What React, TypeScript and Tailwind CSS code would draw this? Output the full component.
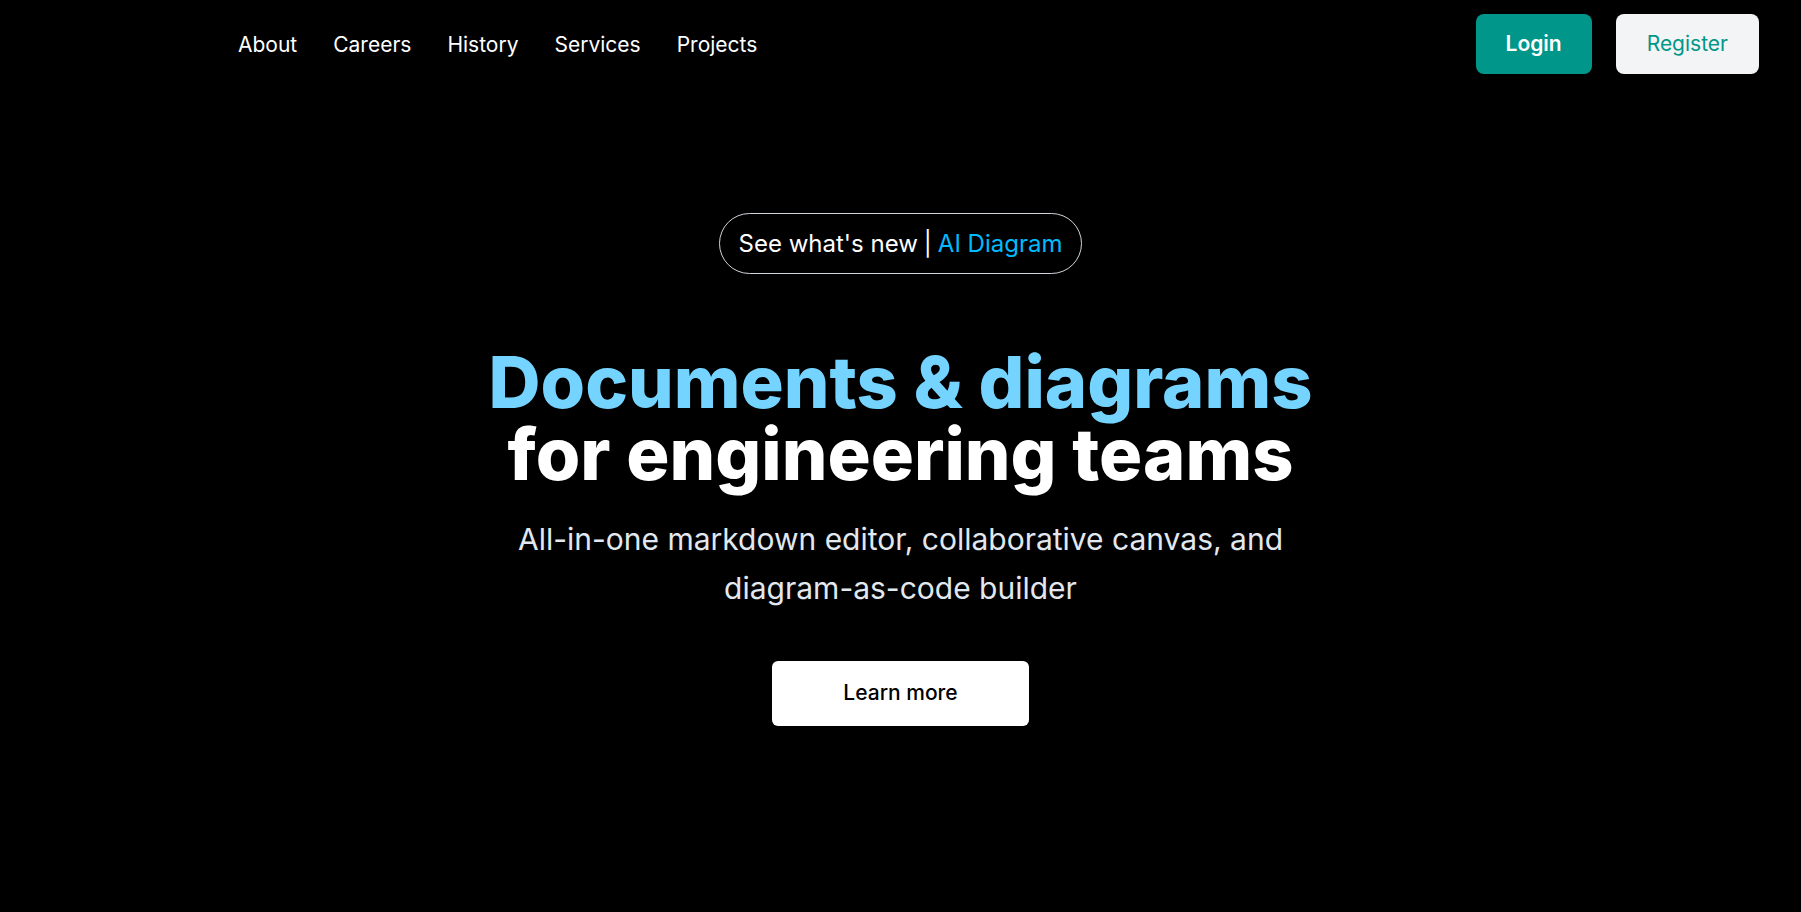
import React from "react";

const links = ["About", "Careers", "History", "Services", "Projects"];

const App: React.FC = () => {
  return (
    <div className="min-h-[912px] bg-black text-white font-['Inter','Liberation_Sans',sans-serif]">
      <header className="flex items-center justify-between py-3.5 pr-[42px] pl-[238px]">
        <nav className="mt-[2px] flex items-center gap-9">
          {links.map((link) => (
            <a key={link} href="#" className="text-[21px] text-white">
              {link}
            </a>
          ))}
        </nav>
        <div className="flex items-center gap-6">
          <button className="rounded-lg bg-teal-600 px-[30px] py-4 text-[21px] leading-7 font-semibold text-white">
            Login
          </button>
          <button className="rounded-lg bg-gray-100 px-[31px] py-4 text-[21px] leading-7 text-teal-600">
            Register
          </button>
        </div>
      </header>

      <main className="flex flex-col items-center pt-[125px] text-center">
        {/* Badge */}
        <a
          href="#"
          className="rounded-full border border-gray-300 px-[19px] py-[13px] text-2xl leading-[33px]"
        >
          <span className="text-white">See what's new</span>
          <span className="mx-[6px] text-white">|</span>
          <span className="text-sky-400">AI Diagram</span>
        </a>

        <h1 className="mt-[72px] text-7xl leading-none font-extrabold">
          <span className="block text-sky-300">Documents &amp; diagrams</span>
          <span className="block text-white">for engineering teams</span>
        </h1>

        <p className="mt-[25px] max-w-[800px] text-3xl leading-relaxed text-slate-200">
          All-in-one markdown editor, collaborative canvas, and
          <br />
          diagram-as-code builder
        </p>

        <button className="mt-12 h-[65px] w-[257px] rounded-md bg-white text-[21px] font-medium text-black">
          Learn more
        </button>
      </main>
    </div>
  );
};

export default App;
